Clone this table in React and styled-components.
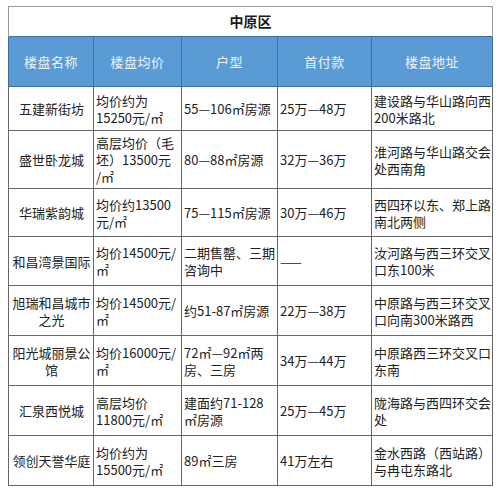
import React from 'react';
import styled, { createGlobalStyle } from 'styled-components';

const GlobalStyle = createGlobalStyle`
  body {
    margin: 0;
    padding: 6px 8px;
    background: #ffffff;
    font-family: "Noto Sans CJK SC", "Noto Sans", sans-serif;
  }
`;

const columns = [
  { title: '楼盘名称', width: 85 },
  { title: '楼盘均价', width: 88 },
  { title: '户型', width: 96 },
  { title: '首付款', width: 94 },
  { title: '楼盘地址', width: 121 },
];

// each cell keeps its own line breaks, like the original image
const rows = [
  { h: 44, cells: ['五建新街坊', '均价约为\n15250元/㎡', '55—106㎡房源', '25万—48万', '建设路与华山路向西\n200米路北'] },
  { h: 58, cells: ['盛世卧龙城', '高层均价（毛\n坯）13500元\n/㎡', '80—88㎡房源', '32万—36万', '淮河路与华山路交会\n处西南角'] },
  { h: 48, cells: ['华瑞紫韵城', '均价约13500\n元/㎡', '75—115㎡房源', '30万—46万', '西四环以东、郑上路\n南北两侧'] },
  { h: 49, cells: ['和昌湾景国际', '均价14500元/\n㎡', '二期售罄、三期\n咨询中', '——', '汝河路与西三环交叉\n口东100米'] },
  { h: 50, cells: ['旭瑞和昌城市\n之光', '均价14500元/\n㎡', '约51-87㎡房源', '22万—38万', '中原路与西三环交叉\n口向南300米路西'] },
  { h: 50, cells: ['阳光城丽景公\n馆', '均价16000元/\n㎡', '72㎡—92㎡两\n房、三房', '34万—44万', '中原路西三环交叉口\n东南'] },
  { h: 50, cells: ['汇泉西悦城', '高层均价\n11800元/㎡', '建面约71-128\n㎡房源', '25万—45万', '陇海路与西四环交会\n处'] },
  { h: 50, cells: ['领创天誉华庭', '均价约为\n15500元/㎡', '89㎡三房', '41万左右', '金水西路（西站路）\n与冉屯东路北'] },
];

const Table = styled.table`
  width: 484px;
  border-collapse: collapse;
  table-layout: fixed;
  font-size: 13px;
  line-height: 17px;
  color: #222;
`;

const TitleCell = styled.th`
  height: 29px;
  border: 1px solid #9a9a9a;
  border-bottom: none;
  font-size: 14px;
  font-weight: bold;
  color: #1a1a1a;
  text-align: center;
  padding: 0;
`;

const HeadCell = styled.th`
  height: 49px;
  background: #5b9bd5;
  color: #eef4fb;
  font-weight: normal;
  font-size: 13px;
  text-align: center;
  border: 1px solid #41719c;
  border-left-color: #3d6a94;
  padding: 0;
  letter-spacing: 0.5px;
`;

const Row = styled.tr`
  height: ${(p) => p.$h}px;
`;

const Cell = styled.td`
  border: 1px solid #666;
  padding: 0 1px 0 2px;
  vertical-align: middle;
  white-space: pre-line;
  text-align: ${(p) => (p.$center ? 'center' : 'left')};
  overflow: hidden;
`;

const App = () => {
  return (
    <>
      <GlobalStyle />
      <Table>
        <colgroup>
          {columns.map((c) => (
            <col key={c.title} style={{ width: c.width }} />
          ))}
        </colgroup>
        <thead>
          <tr>
            <TitleCell colSpan={5}>中原区</TitleCell>
          </tr>
          <tr>
            {columns.map((c) => (
              <HeadCell key={c.title}>{c.title}</HeadCell>
            ))}
          </tr>
        </thead>
        <tbody>
          {rows.map((r, i) => (
            <Row key={i} $h={r.h}>
              {r.cells.map((text, j) => (
                <Cell key={j} $center={j === 0}>
                  {text}
                </Cell>
              ))}
            </Row>
          ))}
        </tbody>
      </Table>
    </>
  );
};

export default App;
